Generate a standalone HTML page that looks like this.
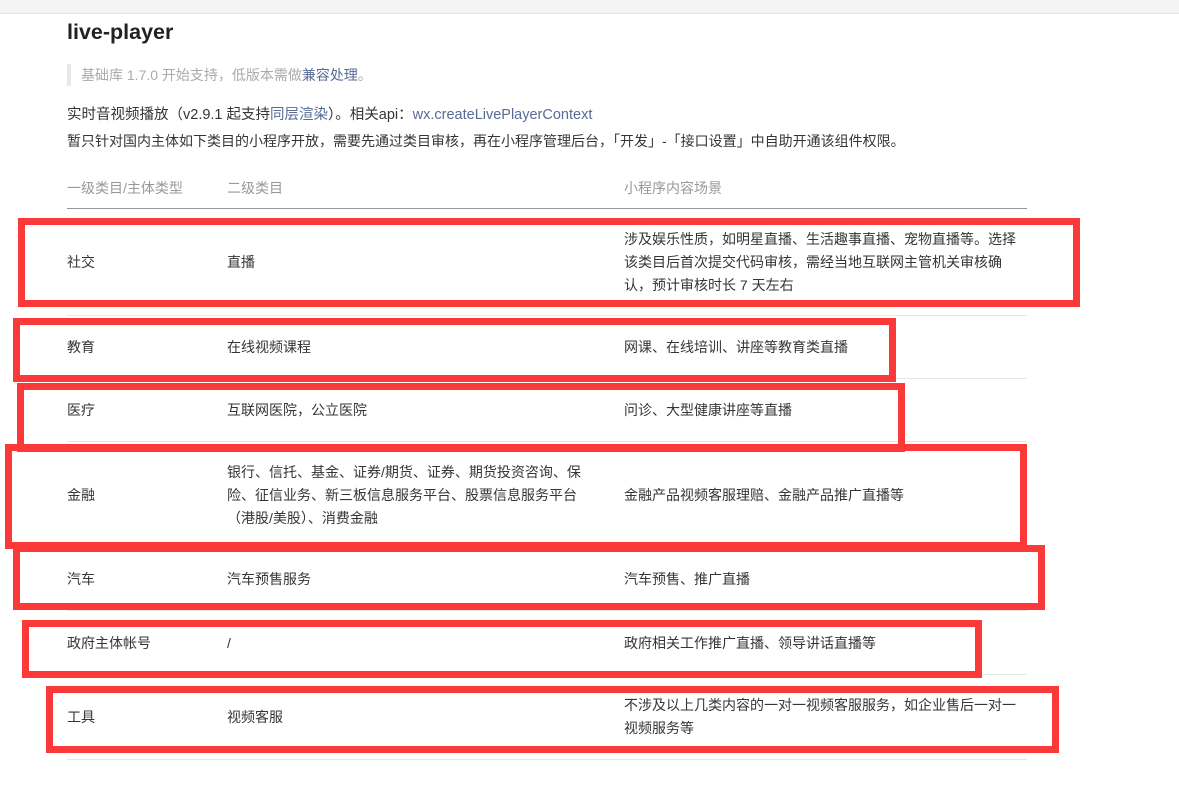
<!DOCTYPE html>
<html><head><meta charset="utf-8"><style>
*{margin:0;padding:0;box-sizing:border-box}
body{width:1179px;height:789px;background:#fff;position:relative;overflow:hidden;font-family:"Liberation Sans","Noto Sans CJK SC",sans-serif;color:#353535;font-size:14px}
.top{position:absolute;left:0;top:0;width:1179px;height:14px;background:#f4f4f4;border-bottom:1px solid #e6e6e6}
.t{position:absolute;white-space:nowrap}
h1{position:absolute;left:67px;top:20px;font-size:21.5px;font-weight:bold;color:#222}
.quote{position:absolute;left:67px;top:64px;height:22px;border-left:4px solid #e8e8e8;padding-left:10px;color:#aaa;font-size:14px;line-height:22px}
.hl{position:absolute;left:67px;width:960px;height:1px;background:#e6e6e6}
.box{position:absolute;border:7px solid #fb3939}
.c{position:absolute;font-size:14px;line-height:23px;color:#353535}
</style></head><body>
<div class="top"></div>
<h1>live-player</h1>
<div class="quote">基础库 1.7.0 开始支持，低版本需做<span style="color:#576b95">兼容处理</span>。</div>
<div class="t" style="left:67px;top:103px;font-size:14.5px">实时音视频播放（v2.9.1 起支持<span style="color:#576b95">同层渲染</span>）。相关api：<span style="color:#576b95">wx.createLivePlayerContext</span></div>
<div class="t" style="left:67px;top:131px;font-size:14px">暂只针对国内主体如下类目的小程序开放，需要先通过类目审核，再在小程序管理后台，「开发」-「接口设置」中自助开通该组件权限。</div>
<div class="t" style="left:67px;top:178px;color:#999">一级类目/主体类型</div>
<div class="t" style="left:227px;top:178px;color:#999">二级类目</div>
<div class="t" style="left:624px;top:178px;color:#999">小程序内容场景</div>
<div class="hl" style="top:208px;background:#999"></div>
<div class="hl" style="top:315px"></div>
<div class="hl" style="top:378px"></div>
<div class="hl" style="top:441px"></div>
<div class="hl" style="top:543px"></div>
<div class="hl" style="top:610px"></div>
<div class="hl" style="top:674px"></div>
<div class="hl" style="top:759px"></div>

<div class="c" style="left:624px;top:228px;width:400px">涉及娱乐性质，如明星直播、生活趣事直播、宠物直播等。选择该类目后首次提交代码审核，需经当地互联网主管机关审核确认，预计审核时长 7 天左右</div>
<div class="c" style="left:67px;top:251px">社交</div><div class="c" style="left:227px;top:251px">直播</div>
<div class="c" style="left:67px;top:336px">教育</div><div class="c" style="left:227px;top:336px">在线视频课程</div><div class="c" style="left:624px;top:336px">网课、在线培训、讲座等教育类直播</div>
<div class="c" style="left:67px;top:399px">医疗</div><div class="c" style="left:227px;top:399px">互联网医院，公立医院</div><div class="c" style="left:624px;top:399px">问诊、大型健康讲座等直播</div>
<div class="c" style="left:67px;top:484px">金融</div>
<div class="c" style="left:227px;top:461px;width:360px">银行、信托、基金、证券/期货、证券、期货投资咨询、保险、征信业务、新三板信息服务平台、股票信息服务平台（港股/美股）、消费金融</div>
<div class="c" style="left:624px;top:484px">金融产品视频客服理赔、金融产品推广直播等</div>
<div class="c" style="left:67px;top:568px">汽车</div><div class="c" style="left:227px;top:568px">汽车预售服务</div><div class="c" style="left:624px;top:568px">汽车预售、推广直播</div>
<div class="c" style="left:67px;top:632px">政府主体帐号</div><div class="c" style="left:227px;top:632px">/</div><div class="c" style="left:624px;top:632px">政府相关工作推广直播、领导讲话直播等</div>
<div class="c" style="left:67px;top:706px">工具</div><div class="c" style="left:227px;top:706px">视频客服</div>
<div class="c" style="left:624px;top:694px;width:395px">不涉及以上几类内容的一对一视频客服服务，如企业售后一对一视频服务等</div>

<div class="box" style="left:18px;top:218px;width:1062px;height:89px"></div>
<div class="box" style="left:13px;top:318px;width:883px;height:64px"></div>
<div class="box" style="left:17px;top:383px;width:888px;height:69px"></div>
<div class="box" style="left:5px;top:444px;width:1022px;height:105px"></div>
<div class="box" style="left:13px;top:545px;width:1032px;height:65px"></div>
<div class="box" style="left:22px;top:620px;width:960px;height:58px"></div>
<div class="box" style="left:46px;top:686px;width:1013px;height:67px"></div>
</body></html>
